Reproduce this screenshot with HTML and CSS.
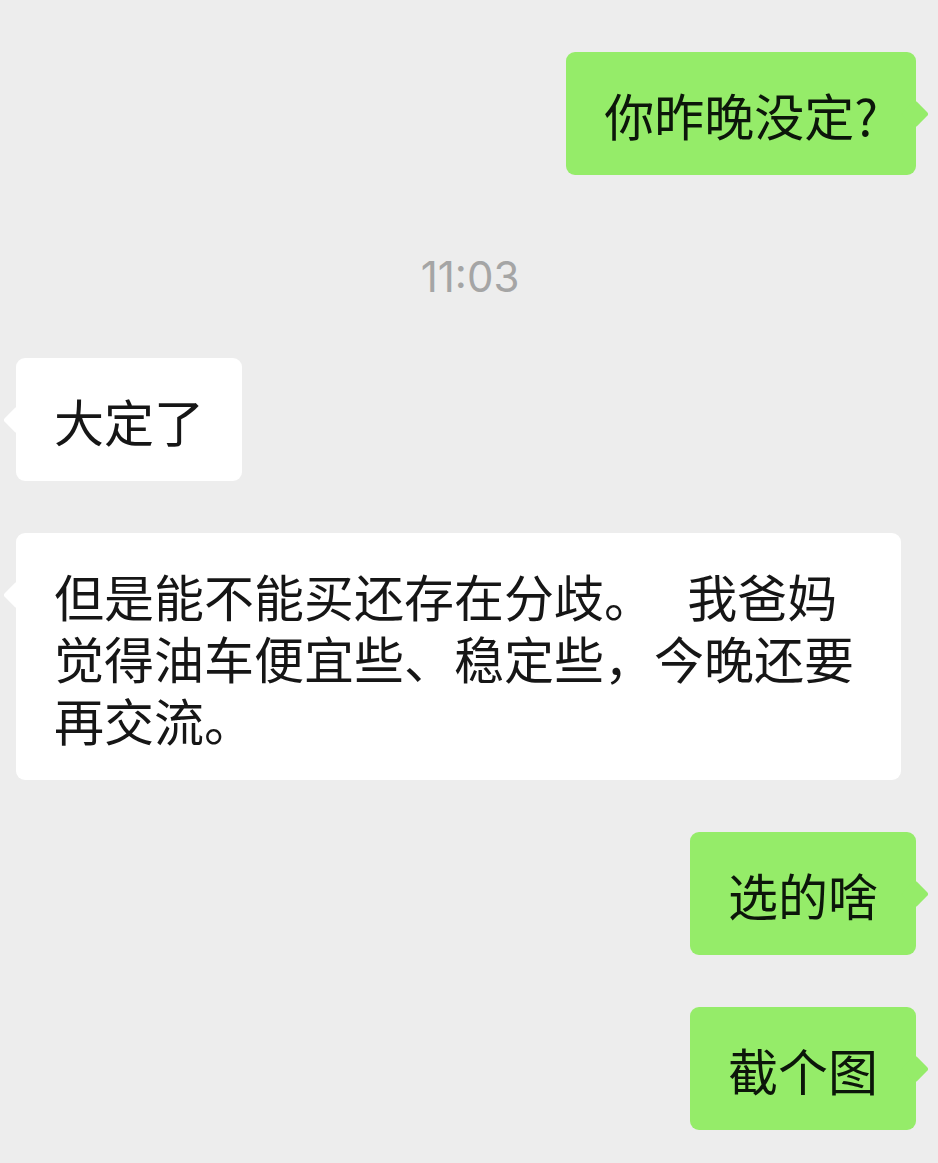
FILE: index.html
```html
<!DOCTYPE html>
<html lang="zh-CN">
<head>
<meta charset="utf-8">
<link rel="stylesheet" href="styles.css">
</head>
<body>
<div class="chat">
  <div class="row row-out">
    <div class="bubble out">你昨晚没定?</div>
  </div>
  <div class="time">11:03</div>
  <div class="row row-in">
    <div class="bubble in">大定了</div>
  </div>
  <div class="row row-in">
    <div class="bubble in long">但是能不能买还存在分歧。 我爸妈觉得油车便宜些、稳定些，今晚还要再交流。</div>
  </div>
  <div class="row row-out">
    <div class="bubble out">选的啥</div>
  </div>
  <div class="row row-out">
    <div class="bubble out">截个图</div>
  </div>
</div>
</body>
</html>
```

FILE: styles.css
```css
html, body {
  margin: 0;
  padding: 0;
  background: #ededed;
}
body {
  width: 938px;
  height: 1163px;
  overflow: hidden;
  font-family: "Noto Sans CJK SC", "Noto Sans", sans-serif;
}
.chat {
  display: flex;
  flex-direction: column;
  padding-top: 52px;
}
.row {
  display: flex;
  margin-bottom: 52px;
}
.row-out {
  justify-content: flex-end;
  padding-right: 22px;
}
.row-in {
  justify-content: flex-start;
  padding-left: 16px;
}
.bubble {
  position: relative;
  box-sizing: border-box;
  padding: 31px 38px 30px;
  border-radius: 9px;
  font-size: 50px;
  line-height: 62px;
}
.bubble.out {
  background: #95ec69;
  color: #0c160a;
}
.bubble.in {
  background: #ffffff;
  color: #161616;
}
.bubble.long {
  max-width: 885px;
  word-spacing: 22px;
}
.bubble::after {
  content: "";
  position: absolute;
  top: 52px;
  width: 20px;
  height: 20px;
  border-radius: 3px;
  transform: rotate(45deg);
}
.bubble.out::after {
  right: -9px;
  background: #95ec69;
}
.bubble.in::after {
  left: -9px;
  background: #ffffff;
}
.time {
  text-align: center;
  font-family: "Inter", "Liberation Sans", sans-serif;
  font-size: 42px;
  line-height: 50px;
  color: #a5a5a5;
  margin-top: 25px;
  margin-bottom: 56px;
  padding-left: 2px;
}
```
